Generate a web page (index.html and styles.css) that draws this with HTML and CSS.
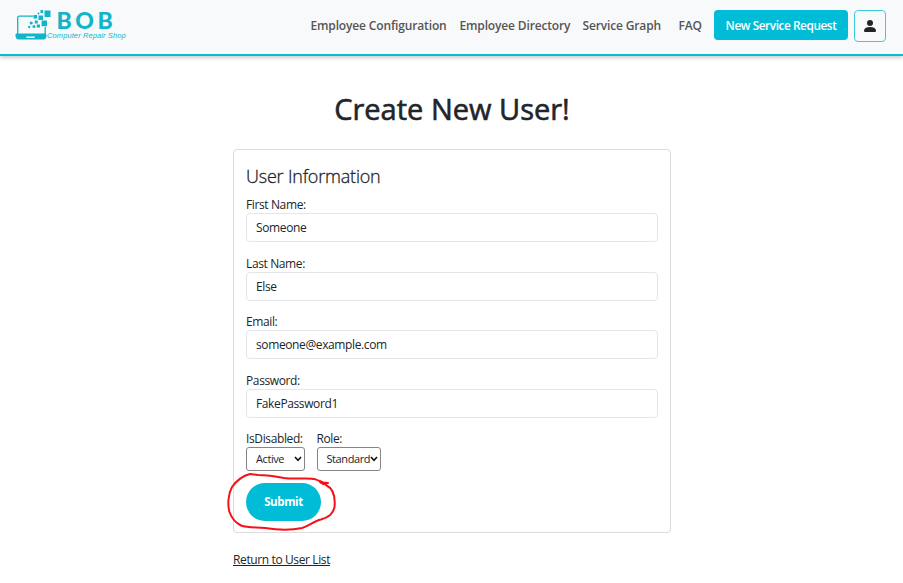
FILE: index.html
```html
<!DOCTYPE html>
<html lang="en">
<head>
<meta charset="utf-8">
<title>Create New User</title>
<link rel="stylesheet" href="styles.css">
</head>
<body>
<header class="topbar">
  <a class="brand">
    <svg class="brand-mark" width="38" height="32" viewBox="0 0 38 32" fill="#10b5ca">
      <path d="M18 6.2H4.2Q2.7 6.2 2.7 8V24M30.2 17V24" fill="none" stroke="#10b5ca" stroke-width="1.3"/>
      <path d="M1 23.5H30Q31.500 23.500 31.500 25.500 31.300 29.500 28.500 29.500H4Q.5 29.500 .5 25.300Q.5 24 1 23.500Z"/>
      <path d="M11 26.600H20V27.300L18.500 28H12.500L11 27.300Z" fill="#f8f9fb"/>
      <path d="M29.500 .5H35.500V7H29.500ZM25.500 0H28V3H25.500ZM26.600 10.600H32V16.200H26.600ZM23.500 5.600H28V10H23.500ZM18.500 5H22V8.600H18.500ZM19.800 10.500H22.800V13.500H19.800ZM21.800 14.600H25V17.600H21.800Z"/>
      <circle cx="16.200" cy="13" r="1.600"/><circle cx="19" cy="16.500" r="1.500"/><circle cx="14.200" cy="17" r="1.200"/><circle cx="23.500" cy="3.500" r="1"/>
    </svg>
    <span class="brand-words"><b class="brand-name">BOB</b><i class="brand-tag">Computer Repair Shop</i></span>
  </a>
  <nav class="nav">
    <a class="n1">Employee Configuration</a>
    <a class="n2">Employee Directory</a>
    <a class="n3">Service Graph</a>
    <a class="n4">FAQ</a>
  </nav>
  <a class="request"><span>New Service Request</span></a>
  <a class="account">
    <svg width="12" height="12" viewBox="0 0 12 12" fill="#212529"><circle cx="6" cy="3" r="3"/><path d="M0 10.800Q0 7 6 7T12 10.800Q12 12 11 12H1Q0 12 0 10.800Z"/></svg>
  </a>
</header>
<main class="page">
  <h1>Create New User!</h1>
  <form class="card">
    <h2>User Information</h2>
    <div class="field"><label>First Name:</label><div class="input">Someone</div></div>
    <div class="field"><label>Last Name:</label><div class="input">Else</div></div>
    <div class="field"><label>Email:</label><div class="input">someone@example.com</div></div>
    <div class="field"><label>Password:</label><div class="input">FakePassword1</div></div>
    <div class="choices">
      <div><label>IsDisabled:</label><div class="select status">Active<svg width="8" height="6" viewBox="0 0 8 6"><path d="M1 1L4 4.300L7 1"/></svg></div></div>
      <div><label>Role:</label><div class="select role">Standard<svg width="8" height="6" viewBox="0 0 8 6"><path d="M1 1L4 4.300L7 1"/></svg></div></div>
    </div>
    <div class="submit-row">
      <a class="submit">Submit</a>
      <svg class="scribble" width="112" height="62" viewBox="226 471 112 62">
        <path d="M323 484C318 479 314 478.500 306 478.400C296 478.400 291 479 284 478C274 476 266 475 258 475L250 474C242 476 237 480 232 487C228 494 227.500 505 229.500 512C232 519 236 523 241 525.500C248 528 257 527 265 528C277 530 291 530.500 302 528C309 526 314 521 321 519.500C329 517 333 514 334.500 507C335.500 497 334 489 326 485C323 483 319 483 320 481L323 482.500L328 483"/>
      </svg>
    </div>
  </form>
  <a class="back">Return to User List</a>
</main>
</body>
</html>
```
FILE: styles.css
```css
* { box-sizing: border-box; }
body {
  margin: 0;
  height: 583px;
  overflow: hidden;
  background: #fff;
  color: #212529;
  font: 12px/17px "Open Sans", "Noto Sans", sans-serif;
  letter-spacing: -.38px;
}
.topbar {
  display: flex;
  align-items: flex-start;
  height: 56px;
  padding: 10px 17px 0 15px;
  background: #f8f9fb;
  border-bottom: 2px solid #08bcd6;
  box-shadow: 0 2px 4px rgba(0, 0, 0, .2);
}
.brand { display: flex; }
.brand-words { display: flex; flex-direction: column; color: #10b5ca; margin-left: -6px; }
.brand-name { font: 900 23px/21px "Lato", sans-serif; letter-spacing: 3.600px; padding-left: 9.500px; height: 21px; }
.brand-tag { font: italic 7.500px/9px "Liberation Sans", sans-serif; letter-spacing: .1px; white-space: nowrap; }
.nav {
  display: flex;
  margin-left: auto;
  font-weight: 600;
  line-height: 31px;
  letter-spacing: -.15px;
  color: #555;
  white-space: nowrap;
}
.nav a { flex: none; }
.n1 { width: 149px; }
.n2 { width: 123px; }
.n3 { width: 96px; }
.n4 { width: 35.500px; }
.request {
  width: 134px;
  height: 30px;
  border-radius: 4px;
  background: #00bcd6;
  color: #fff;
  font-size: 11.800px;
  font-weight: 600;
  line-height: 31px;
  letter-spacing: -.42px;
  text-align: center;
  white-space: nowrap;
}
.account {
  display: flex;
  align-items: center;
  justify-content: center;
  width: 32px;
  height: 32px;
  margin-left: 6px;
  border: 1px solid #40cbdc;
  border-radius: 4px;
}
.page { width: 438px; margin: 0 0 0 233px; }
h1 {
  margin: 0;
  padding-top: 34px;
  height: 93px;
  font-size: 29px;
  font-weight: 500;
  line-height: 38px;
  letter-spacing: 0;
  -webkit-text-stroke: .6px #212529;
  text-align: center;
  white-space: nowrap;
}
.card {
  height: 384px;
  padding: 13px 12px 0;
  border: 1px solid #dcdcdc;
  border-radius: 4px;
}
h2 {
  margin: 0 0 8px;
  font-size: 18px;
  font-weight: 300;
  line-height: 26px;
  letter-spacing: -.2px;
  -webkit-text-stroke: .3px #212529;
}
label { display: block; height: 16px; line-height: 16px; }
.field { height: 58.500px; }
.input {
  height: 29px;
  padding-left: 9px;
  border: 1px solid #e3e6ea;
  border-radius: 4px;
  line-height: 28px;
}
.choices { display: flex; gap: 12px; }
.select {
  display: flex;
  align-items: center;
  justify-content: space-between;
  height: 24px;
  padding: 0 2px 1px 9px;
  border: 1px solid #858585;
  border-radius: 3px;
  font-size: 11px;
  letter-spacing: -.42px;
}
.select svg { flex: none; }
.select path { fill: none; stroke: #111; stroke-width: 1.600; }
.status { width: 58.500px; }
.role { width: 64.500px; }
.submit-row { position: relative; margin-top: 12px; }
.submit {
  display: block;
  width: 75px;
  height: 37.500px;
  border-radius: 19px;
  background: #00bcd6;
  color: #fff;
  font-size: 11.500px;
  font-weight: 700;
  line-height: 38px;
  text-align: center;
}
.scribble { position: absolute; left: -20px; top: -12px; }
.scribble path { fill: none; stroke: #f5101a; stroke-width: 2; stroke-linecap: round; }
.back { display: inline-block; margin-top: 18px; text-decoration: underline; }
```
